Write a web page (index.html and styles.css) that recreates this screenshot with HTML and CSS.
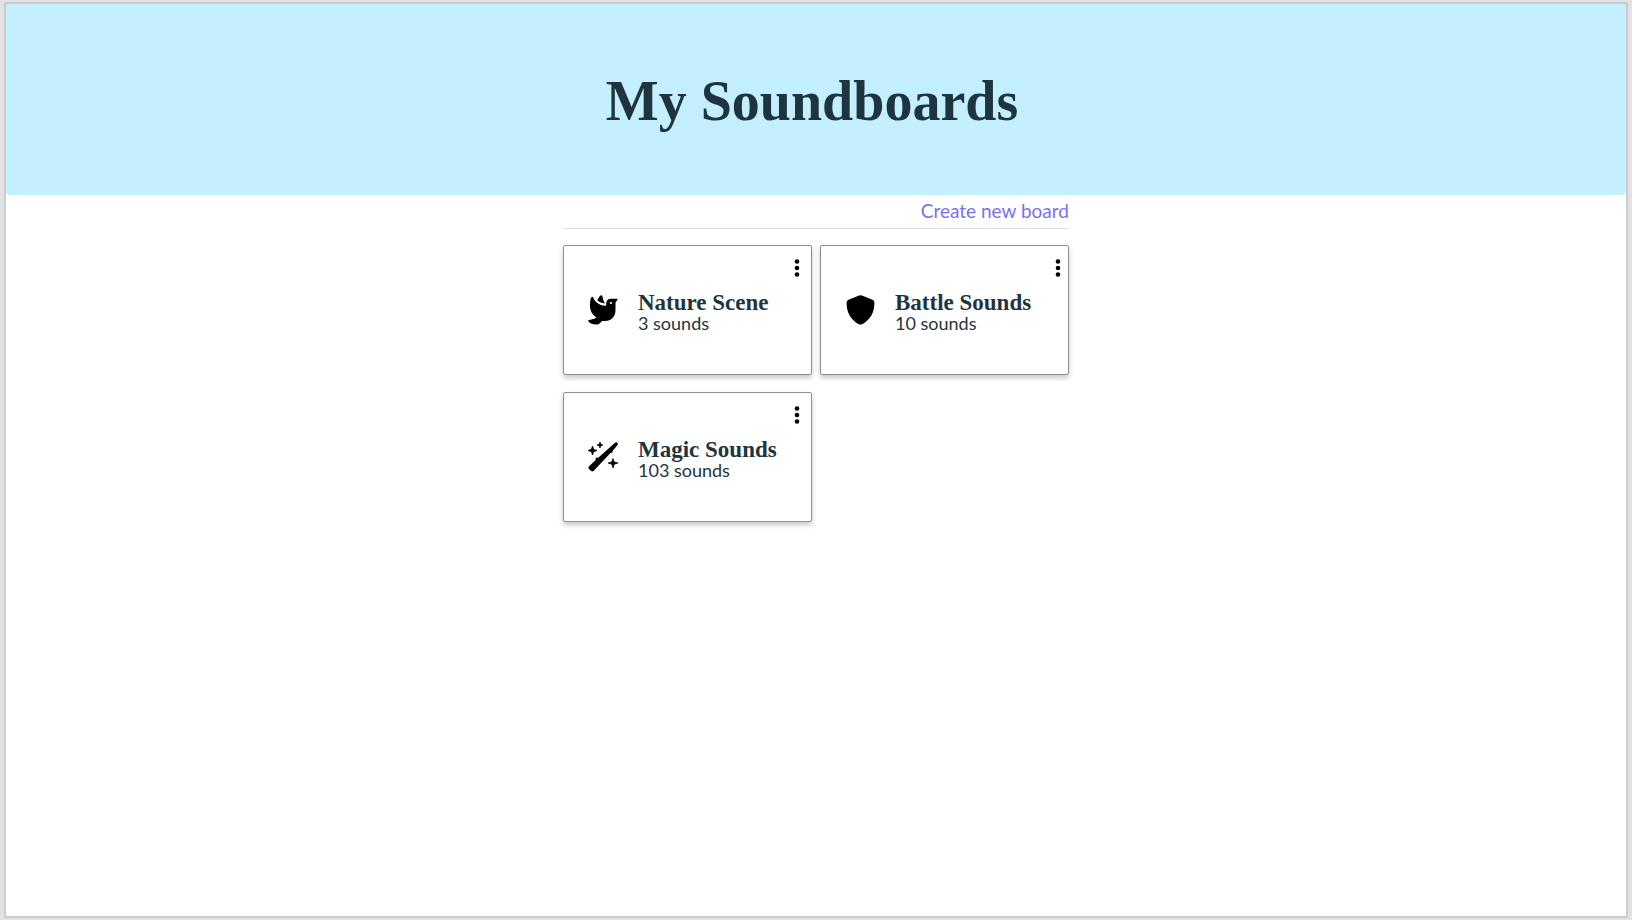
FILE: index.html
```
<!DOCTYPE html>
<html lang="en">
<head>
<meta charset="utf-8">
<title>My Soundboards</title>
<link rel="stylesheet" href="styles.css">
</head>
<body>
<div class="page">
  <header class="banner"><h1 class="banner-title">My Soundboards</h1></header>
  <main class="content">
    <div class="toolbar"><a class="create-link" href="#">Create new board</a></div>
    <ul class="boards">
      <li class="card">
        <svg class="card-icon" viewBox="0 0 30 30" aria-hidden="true">
          <path d="M3.200 2.500Q4.500 .8 5.300 2.800C7.500 7.500 11 10.300 17.500 10.800Q18.200 10.800 18.200 10V8.500C18.200 5.500 20 3.800 23 3.800H29Q30 4 29.300 5L27.500 7.500V15C27.500 21.500 23.500 26 17 26H14C12 28.800 9.500 30 7 29.500C4 29 1.500 28 .3 26.200Q-.3 25 1.200 24.900C4 24.500 6.500 24 8.500 22.500C4.500 20 2 16 2 10.500C2 7 2.300 4.500 3.200 2.500Z"/>
          <path d="M12.500 .5Q14 -.5 14.500 1.500C14.800 4 15.800 6.500 17 8.500C14 8 11.200 7 9.300 5.200C10 3.500 11.200 1.700 12.500 .5Z"/>
          <circle cx="23" cy="8" r="1.100" fill="#fff"/>
        </svg>
        <div class="card-text"><h2 class="card-title">Nature Scene</h2><p class="card-count">3 sounds</p></div>
        <button class="menu" type="button" aria-label="Nature Scene options"><svg class="dots" viewBox="0 0 6 18"><circle cx="3" cy="2.500" r="2.300"/><circle cx="3" cy="9" r="2.300"/><circle cx="3" cy="15.500" r="2.300"/></svg></button>
      </li>
      <li class="card">
        <svg class="card-icon" viewBox="0 0 30 30" aria-hidden="true">
          <path d="M14 .6Q15.500 -.2 17 .6L27.500 4.700Q29.300 5.500 29.400 7.500C29.600 17 25.500 24.500 17.200 29.200Q15.500 30 13.800 29.200C5.500 24.500 1.400 17 1.600 7.500Q1.700 5.500 3.500 4.700Z"/>
        </svg>
        <div class="card-text"><h2 class="card-title">Battle Sounds</h2><p class="card-count">10 sounds</p></div>
        <button class="menu menu-edge" type="button" aria-label="Battle Sounds options"><svg class="dots" viewBox="0 0 6 18"><circle cx="3" cy="2.500" r="2.300"/><circle cx="3" cy="9" r="2.300"/><circle cx="3" cy="15.500" r="2.300"/></svg></button>
      </li>
      <li class="card">
        <svg class="card-icon" viewBox="0 0 30 30" aria-hidden="true">
          <path d="M27 .7Q28.500-.3 29.500.8Q30.300 1.800 29.300 3.200L24.500 9L24.600 10.500L22.500 11L6 28.500Q4.500 30.200 2.800 28.800L1 27Q-.3 25.500 1.300 24L7.500 18.300L7.800 15.800L10.500 15.500Z"/>
          <path d="M4.500 4L5.700 7.300L9 8.500L5.700 9.700L4.500 13L3.300 9.700L0 8.500L3.300 7.300ZM12 0L12.900 2.300L15 3L12.900 3.800L12 6L11.100 3.800L9 3L11.100 2.300ZM25 16.500L26.200 19.900L30 21L26.200 22.200L25 26L23.800 22.200L20 21L23.800 19.900Z" stroke="#000" stroke-width=".7"/>
        </svg>
        <div class="card-text"><h2 class="card-title">Magic Sounds</h2><p class="card-count">103 sounds</p></div>
        <button class="menu" type="button" aria-label="Magic Sounds options"><svg class="dots" viewBox="0 0 6 18"><circle cx="3" cy="2.500" r="2.300"/><circle cx="3" cy="9" r="2.300"/><circle cx="3" cy="15.500" r="2.300"/></svg></button>
      </li>
    </ul>
  </main>
</div>
</body>
</html>
```
FILE: styles.css
```
* { box-sizing: border-box; }
body {
  margin: 0;
  min-height: 100vh;
  padding: 2px 4px;
  display: flex;
  background: #e2e2e2;
  color: #1e353f;
  font-family: Lato, sans-serif;
}
.page {
  flex: 1;
  border: 2px solid #cdcdcd;
  background: #fff;
}
.banner {
  display: flex;
  align-items: center;
  justify-content: center;
  padding: 66px 8px 63px 0;
  background: #c4effe;
  border-radius: 0 0 4px 4px;
}
.banner-title {
  margin: 0;
  font: bold 56px/62px "Liberation Serif", serif;
}
.content {
  max-width: 506px;
  margin: 0 auto;
}
.toolbar {
  display: flex;
  justify-content: flex-end;
  padding: 3px 0 5px;
  border-bottom: 1px solid #dedede;
}
.create-link {
  color: #7c70f2;
  font-size: 19px;
  line-height: 25px;
  text-decoration: none;
}
.boards {
  display: grid;
  grid-template-columns: 1fr 1fr;
  gap: 17px 8px;
  margin: 16px 0 0;
  padding: 0;
  list-style: none;
}
.card {
  position: relative;
  display: flex;
  align-items: center;
  gap: 20px;
  min-height: 130px;
  padding: 0 24px;
  border: 1px solid #8f8f8f;
  border-radius: 2px;
  background: #fff;
  box-shadow: 0 3px 5px rgba(0, 0, 0, 0.22);
}
.card-icon {
  width: 30px;
  height: 30px;
  flex: none;
}
.card-text { padding-top: 6px; }
.card-title {
  margin: 0;
  font: bold 23px/20px "Liberation Serif", serif;
}
.card-count {
  margin: 0;
  font-size: 18px;
  line-height: 20px;
}
.menu {
  position: absolute;
  top: 13px;
  right: 11px;
  display: flex;
  padding: 0;
  border: 0;
  background: none;
}
.menu-edge { right: 7px; }
.dots {
  width: 6px;
  height: 18px;
}
```
